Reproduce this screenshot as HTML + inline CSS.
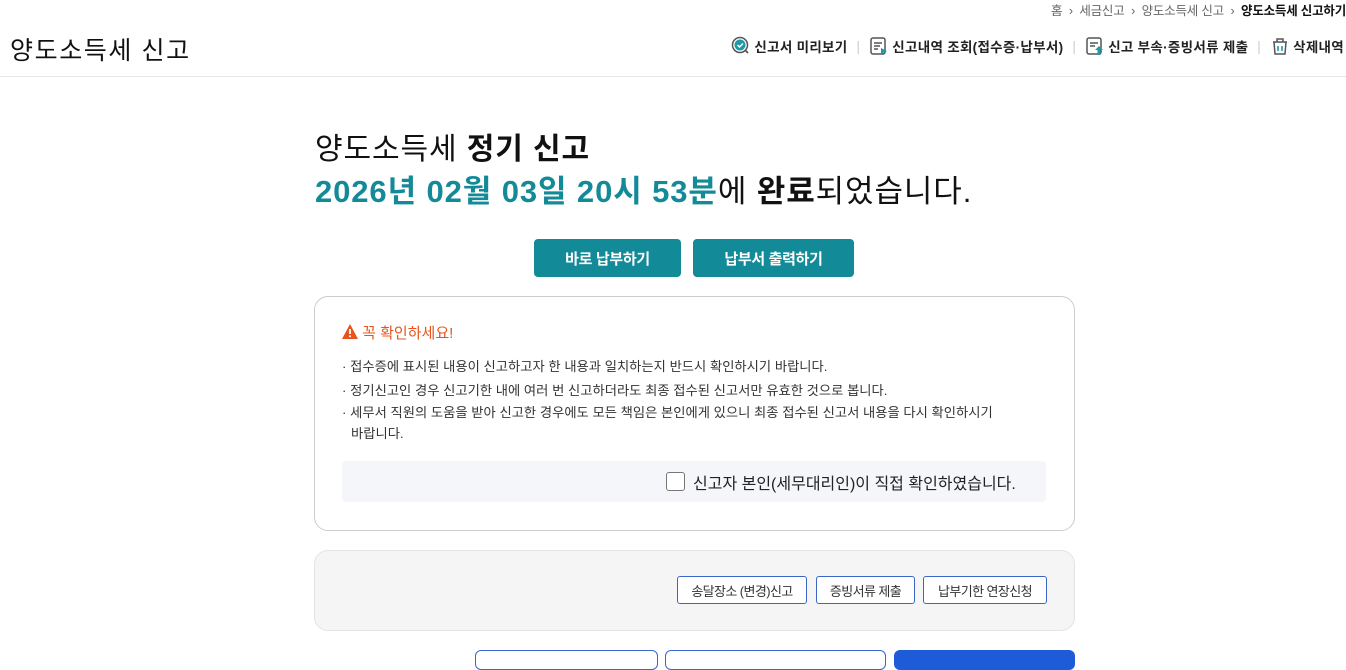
<!DOCTYPE html>
<html><head><meta charset="utf-8"><style>
*{margin:0;padding:0;box-sizing:border-box}
body{width:1346px;height:656px;overflow:hidden;background:#fff;font-family:"Liberation Sans","Noto Sans CJK KR",sans-serif;color:#222;position:relative}
.abs{position:absolute;white-space:nowrap}
.bc{top:0;right:0;font-size:12.5px;color:#666;letter-spacing:-0.2px}
.bc b{color:#111}
.title{left:10px;top:31px;font-size:25px;color:#111;letter-spacing:1.6px}
.tools{top:36px;right:2px;font-size:13.5px;font-weight:bold;color:#222;letter-spacing:0.3px;display:flex;align-items:center}
.tools .sep{color:#ccc;margin:0 9px;font-weight:normal}
.tools svg{margin-right:3px;vertical-align:middle}
.hr{left:0;top:76px;width:1346px;height:1px;background:#e6e6e6}
.h1{left:315px;top:124px;font-size:30px;letter-spacing:0.9px;color:#111}
.h2{left:315px;top:166px;font-size:31px;letter-spacing:0.9px;color:#111}
.teal{color:#138a97;font-weight:bold}
.btn{top:239px;height:38px;background:#138a97;color:#fff;border-radius:4px;font-size:15px;font-weight:bold;display:flex;align-items:center;justify-content:center;letter-spacing:-0.3px}
.box{left:314px;top:296px;width:761px;height:235px;border:1px solid #ccc;border-radius:14px}
.warn{left:342px;top:322px;font-size:15px;color:#e8541c;letter-spacing:0}
.li{left:342px;font-size:13.3px;color:#333;letter-spacing:0}
.chk{left:342px;top:461px;width:704px;height:41px;background:#f4f6fa;border-radius:4px}
.gray{left:314px;top:550px;width:761px;height:81px;background:#f5f5f5;border:1px solid #e3e3e3;border-radius:14px}
.ob{top:576px;height:28px;border:1px solid #3b66c9;border-radius:3px;background:#fff;color:#333;font-size:13px;display:flex;align-items:center;justify-content:center;letter-spacing:-0.6px}
</style></head><body>
<div class="abs bc">홈 &nbsp;›&nbsp; 세금신고 &nbsp;›&nbsp; 양도소득세 신고 &nbsp;›&nbsp; <b>양도소득세 신고하기</b></div>
<div class="abs title">양도소득세 신고</div>
<div class="abs tools">
<svg width="20" height="20" viewBox="0 0 20 20"><circle cx="9" cy="9" r="7.5" fill="none" stroke="#555" stroke-width="1.5"/><circle cx="9" cy="9" r="5.5" fill="#1e9aa8"/><path d="M6.5 9l2 2 3.5-3.5" stroke="#fff" stroke-width="1.5" fill="none"/><path d="M14 14l3 3" stroke="#555" stroke-width="1.8"/></svg>신고서 미리보기<span class="sep">|</span>
<svg width="20" height="20" viewBox="0 0 20 20"><rect x="2" y="2" width="14" height="16" rx="2" fill="none" stroke="#555" stroke-width="1.5"/><path d="M5 7h8M5 10h6M5 13h4" stroke="#555" stroke-width="1.4"/><path d="M12 12l6 3-6 3z" fill="#1e9aa8"/></svg>신고내역 조회(접수증·납부서)<span class="sep">|</span>
<svg width="20" height="20" viewBox="0 0 20 20"><rect x="2" y="2" width="14" height="16" rx="2" fill="none" stroke="#555" stroke-width="1.5"/><path d="M5 7h8M5 10h5" stroke="#555" stroke-width="1.4"/><path d="M14 10l-4 4h2.5v5h3v-5H18z" fill="#1e9aa8"/></svg>신고 부속·증빙서류 제출<span class="sep">|</span>
<svg width="20" height="20" viewBox="0 0 20 20"><path d="M3 6h14M7 6V3h6v3M4 6l1 12h10l1-12" fill="none" stroke="#555" stroke-width="1.5"/><path d="M8 10v5M12 10v5" stroke="#1e9aa8" stroke-width="1.6"/></svg>삭제내역
</div>
<div class="abs hr"></div>
<div class="abs h1">양도소득세 <b>정기 신고</b></div>
<div class="abs h2"><span class="teal">2026년 02월 03일 20시 53분</span>에 <b>완료</b>되었습니다.</div>
<div class="abs btn" style="left:534px;width:147px">바로 납부하기</div>
<div class="abs btn" style="left:693px;width:161px">납부서 출력하기</div>
<div class="abs box"></div>
<div class="abs warn"><svg width="16" height="15" viewBox="0 0 16 15" style="vertical-align:-1px"><path d="M8 0L16 15H0z" fill="#e8541c"/><path d="M8 5v5" stroke="#fff" stroke-width="1.8"/><circle cx="8" cy="12.2" r="1" fill="#fff"/></svg> 꼭 확인하세요!</div>
<div class="abs li" style="top:356px">· 접수증에 표시된 내용이 신고하고자 한 내용과 일치하는지 반드시 확인하시기 바랍니다.</div>
<div class="abs li" style="top:380px">· 정기신고인 경우 신고기한 내에 여러 번 신고하더라도 최종 접수된 신고서만 유효한 것으로 봅니다.</div>
<div class="abs li" style="top:402px">· 세무서 직원의 도움을 받아 신고한 경우에도 모든 책임은 본인에게 있으니 최종 접수된 신고서 내용을 다시 확인하시기</div>
<div class="abs li" style="top:423px;left:351px">바랍니다.</div>
<div class="abs chk"></div>
<div class="abs" style="left:666px;top:472px;width:19px;height:19px;border:1px solid #777;border-radius:3px;background:#fff"></div>
<div class="abs" style="left:693px;top:470px;font-size:16px;color:#222;letter-spacing:0">신고자 본인(세무대리인)이 직접 확인하였습니다.</div>
<div class="abs gray"></div>
<div class="abs ob" style="left:677px;width:130px">송달장소 (변경)신고</div>
<div class="abs ob" style="left:816px;width:99px">증빙서류 제출</div>
<div class="abs ob" style="left:923px;width:124px">납부기한 연장신청</div>
<div class="abs" style="left:475px;top:650px;width:183px;height:20px;border:1px solid #3b66c9;border-radius:6px"></div>
<div class="abs" style="left:665px;top:650px;width:221px;height:20px;border:1px solid #3b66c9;border-radius:6px"></div>
<div class="abs" style="left:894px;top:650px;width:181px;height:20px;background:#1e5bd8;border-radius:6px"></div>
</body></html>
